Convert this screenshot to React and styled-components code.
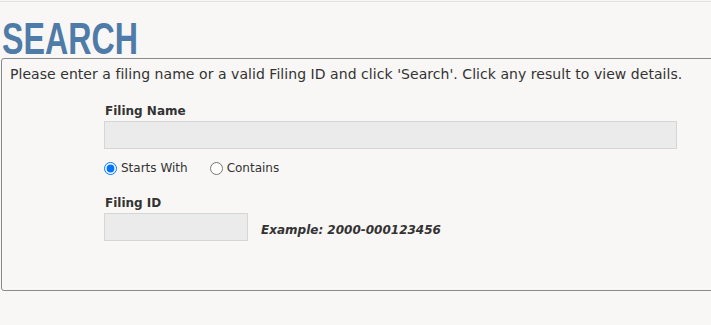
import React from "react";
import styled, { createGlobalStyle } from "styled-components";

const Global = createGlobalStyle`
  html, body { margin: 0; padding: 0; background: #f8f7f5; }
  body { font-family: "DejaVu Sans", Verdana, sans-serif; color: #333; overflow: hidden; }
`;

const Page = styled.div`
  width: 711px;
  height: 325px;
  overflow: hidden;
  border-top: 1px solid #e2e2e2;
  margin-top: 1px;
  box-sizing: border-box;
`;

const Title = styled.h1`
  margin: 0;
  padding: 15px 0 0 2px;
  height: 41px;
  font-family: "Liberation Sans", Arial, sans-serif;
  font-weight: 700;
  font-size: 45px;
  line-height: 44px;
  color: #4f7ba8;
  white-space: nowrap;
  span {
    display: inline-block;
    transform: scaleX(0.715);
    transform-origin: left center;
  }
`;

const Box = styled.div`
  margin-left: 1px;
  width: 740px;
  height: 233px;
  box-sizing: border-box;
  border: 1px solid #8a8a8a;
  border-radius: 3px;
  padding: 6px 0 0 8px;
`;

const Intro = styled.p`
  margin: 0;
  font-size: 14px;
  letter-spacing: 0.05px;
  line-height: 19px;
  color: #333;
  white-space: nowrap;
`;

const Form = styled.div`
  padding: 19px 0 0 94px;
  display: flex;
  flex-direction: column;
`;

const Label = styled.label`
  display: block;
  font-weight: 700;
  font-size: 12px;
  line-height: 16px;
  color: #333;
  padding-left: 1px;
  margin-bottom: 2px;
`;

const TextInput = styled.input`
  box-sizing: border-box;
  width: ${(p) => p.$w}px;
  height: 28px;
  background: #ebebeb;
  border: 1px solid #d6d6d6;
  margin: 0;
  padding: 0 6px;
  font-family: "DejaVu Sans", sans-serif;
  font-size: 12px;
`;

const RadioRow = styled.div`
  display: flex;
  align-items: center;
  gap: 22px;
  margin-top: 11px;
  height: 16px;
`;

const RadioLabel = styled.label`
  display: flex;
  align-items: center;
  gap: 4px;
  font-size: 12px;
  color: #333;
  input {
    margin: 0;
    width: 13px;
    height: 13px;
  }
`;

const IdRow = styled.div`
  display: flex;
  align-items: center;
  gap: 13px;
`;

const Example = styled.span`
  font-size: 12px;
  font-weight: 700;
  font-style: italic;
  color: #333;
  padding-top: 6px;
`;

const Group = styled.div`
  margin-top: ${(p) => p.$mt || 0}px;
`;

export default function App() {
  return (
    <>
      <Global />
      <Page>
        <Title>
          <span>SEARCH</span>
        </Title>
        <Box>
          <Intro>
            Please enter a filing name or a valid Filing ID and click 'Search'. Click any result to view details.
          </Intro>
          <Form>
            <Group>
              <Label>Filing Name</Label>
              <TextInput $w={573} />
              <RadioRow>
                <RadioLabel>
                  <input type="radio" name="mode" defaultChecked />
                  Starts With
                </RadioLabel>
                <RadioLabel>
                  <input type="radio" name="mode" />
                  Contains
                </RadioLabel>
              </RadioRow>
            </Group>
            <Group $mt={19}>
              <Label>Filing ID</Label>
              <IdRow>
                <TextInput $w={144} />
                <Example>Example: 2000-000123456</Example>
              </IdRow>
            </Group>
          </Form>
        </Box>
      </Page>
    </>
  );
}
